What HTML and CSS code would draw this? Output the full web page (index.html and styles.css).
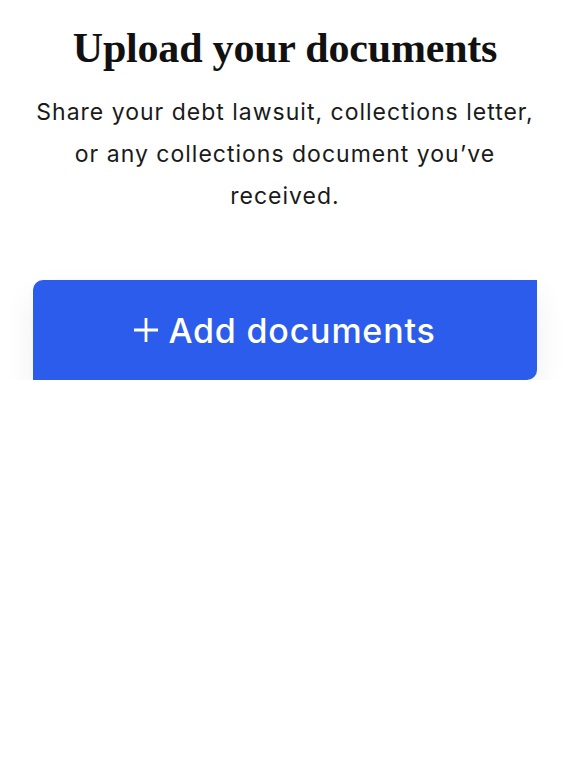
FILE: index.html
```html
<!DOCTYPE html>
<html lang="en">
<head>
    <meta charset="UTF-8">
    <meta name="viewport" content="width=device-width, initial-scale=1.0">
    <title>Upload your documents</title>
    <link rel="stylesheet" href="styles.css">
</head>
<body>
    <div class="upload">
        <h1 class="upload-title">Upload your documents</h1>
        <p class="upload-text">Share your debt lawsuit, collections letter, or any collections document you’ve received.</p>
        <button class="add-button" type="button">
            <svg class="add-plus" viewBox="0 0 24 24" aria-hidden="true">
                <path d="M12 0 V24 M0 12 H24" stroke="#ffffff" stroke-width="2.8" fill="none"/>
            </svg>
            <span>Add documents</span>
        </button>
    </div>
</body>
</html>
```

FILE: styles.css
```css
body, html {
    margin: 0;
    padding: 0;
    background-color: #ffffff;
    color: #111111;
}
.upload {
    padding: 24px 37px 0 33px;
    display: flex;
    flex-direction: column;
    align-items: stretch;
    text-align: center;
}
.upload-title {
    margin: 0;
    font-family: 'Liberation Serif', serif;
    font-weight: bold;
    font-size: 42px;
    line-height: 48px;
    letter-spacing: -0.2px;
    color: #111111;
}
.upload-text {
    margin: 19px 0 0;
    font-family: Inter, sans-serif;
    font-size: 23px;
    line-height: 42px;
    letter-spacing: 1px;
    color: #1a1a1a;
}
.add-button {
    margin-top: 63px;
    height: 100px;
    display: flex;
    align-items: center;
    justify-content: center;
    gap: 10px;
    border: none;
    border-radius: 10px 0 10px 0;
    background-color: #2c5ceb;
    color: #ffffff;
    font-family: Inter, sans-serif;
    font-weight: 500;
    font-size: 34px;
    letter-spacing: 0.8px;
    box-shadow: 0 14px 32px rgba(0, 0, 0, 0.07);
    cursor: pointer;
}
.add-plus {
    width: 24px;
    height: 24px;
}
```
